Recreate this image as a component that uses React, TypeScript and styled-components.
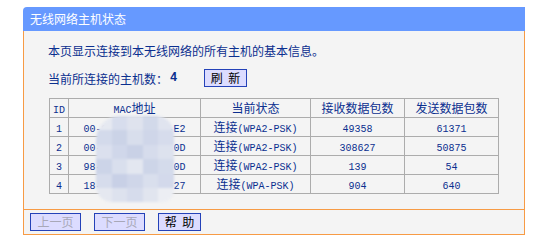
import React from "react";
import styled, { createGlobalStyle } from "styled-components";

const GlobalStyle = createGlobalStyle`
  html, body { margin: 0; padding: 0; background: #ffffff; }
  body { font-family: "Noto Sans CJK SC", "Liberation Sans", sans-serif; font-size: 12px; }
`;

const ORANGE = "#F79B45";
const TEXT = "#0B2F8F";

const Panel = styled.div`
  margin: 7px 0 0 23px;
  width: 502px;
`;

const Header = styled.div`
  height: 24px;
  background: #6699ff;
  border-top-left-radius: 4px;
  color: #ffffff;
  font-size: 12px;
  line-height: 24px;
  padding-left: 7px;
`;

const Body = styled.div`
  height: 178px;
  box-sizing: border-box;
  background: #f4f4f4;
  border-left: 1px solid ${ORANGE};
  border-right: 1px solid ${ORANGE};
  padding: 13px 0 0 24px;
  color: ${TEXT};
`;

const Line = styled.div`
  height: 14px;
  line-height: 14px;
`;

const CountRow = styled.div`
  display: flex;
  align-items: center;
  margin-top: 11px;
  height: 18px;
`;

const Count = styled.span`
  font-family: "Liberation Mono", monospace;
  font-weight: bold;
  margin-left: 2px;
  width: 34px;
  display: inline-block;
`;

const Button = styled.button<{ $w: number; $disabled?: boolean }>`
  box-sizing: border-box;
  width: ${(p) => p.$w}px;
  height: 18px;
  padding: 0;
  margin: 0;
  background: #dcdcff;
  border: 1px solid #2442b8;
  font-family: "Noto Sans CJK SC", sans-serif;
  font-size: 12px;
  line-height: 16px;
  color: ${(p) => (p.$disabled ? "#a8a8b8" : "#000000")};
  word-spacing: 3px;
`;

const TableWrap = styled.div`
  position: relative;
  margin-top: 11px;
  margin-left: 1px;
  width: 449px;
`;

const Table = styled.table`
  border-collapse: collapse;
  width: 449px;
  table-layout: fixed;
  border-right: 1px solid #9a9a9a;
  border-bottom: 1px solid #9a9a9a;
`;

const Cell = styled.td`
  border: 1px solid #acacac;
  height: 19px;
  box-sizing: border-box;
  padding: 0;
  text-align: center;
  vertical-align: middle;
  color: ${TEXT};
  font-size: 12px;
  line-height: 16px;
  white-space: nowrap;
  overflow: hidden;
`;

const HeadCell = styled(Cell).attrs({ as: "th" })`
  font-weight: normal;
`;

const Mono = styled.span`
  font-family: "Liberation Mono", monospace;
  font-size: 10px;
  line-height: 1;
`;

const Mosaic = styled.div`
  position: absolute;
  left: 47px;
  top: 18px;
  width: 78px;
  height: 86px;
  display: grid;
  grid-template-columns: repeat(5, 15.6px);
  grid-auto-rows: 14.4px;
  border-radius: 24px 18px 12px 16px;
  overflow: hidden;
  filter: blur(0.8px);
`;

const Block = styled.div<{ $c: string }>`
  background: ${(p) => p.$c};
`;

const Footer = styled.div`
  height: 26px;
  box-sizing: border-box;
  background: #f4f4f4;
  border: 1px solid ${ORANGE};
  display: flex;
  align-items: center;
  gap: 13px;
  padding-left: 6px;
`;

const mosaicColors = [
  "#e6e9f1", "#d7dded", "#dfe3ee", "#d2d9ea", "#e0e4ef",
  "#d3daeb", "#cbd3e7", "#d8deec", "#cfd6e9", "#d6dcec",
  "#dbe0ee", "#d0d7ea", "#c9d1e6", "#d6dcec", "#dde2ee",
  "#ccd4e8", "#d9dfed", "#e3e7f0", "#cdd5e8", "#d4dbeb",
  "#d6dcec", "#c8d0e6", "#cfd6e9", "#d9dfed", "#d3d9eb",
  "#e5e8f0", "#dde2ee", "#d6dcec", "#e1e5ef", "#eceef3",
];

const rows = [
  { id: "1", mac: "00-00-00-00-00-E2", st: "WPA2-PSK", rx: "49358", tx: "61371" },
  { id: "2", mac: "00-00-00-00-00-0D", st: "WPA2-PSK", rx: "308627", tx: "50875" },
  { id: "3", mac: "98-00-00-00-00-0D", st: "WPA2-PSK", rx: "139", tx: "54" },
  { id: "4", mac: "18-00-00-00-00-27", st: "WPA-PSK", rx: "904", tx: "640" },
];

export default function App() {
  return (
    <>
      <GlobalStyle />
      <Panel>
        <Header>无线网络主机状态</Header>
        <Body>
          <Line>本页显示连接到本无线网络的所有主机的基本信息。</Line>
          <CountRow>
            当前所连接的主机数：<Count>4</Count>
            <Button $w={43}>刷 新</Button>
          </CountRow>
          <TableWrap>
            <Table>
              <colgroup>
                <col style={{ width: 19 }} />
                <col style={{ width: 132 }} />
                <col style={{ width: 110 }} />
                <col style={{ width: 94 }} />
                <col style={{ width: 94 }} />
              </colgroup>
              <thead>
                <tr>
                  <HeadCell><Mono>ID</Mono></HeadCell>
                  <HeadCell><Mono>MAC</Mono>地址</HeadCell>
                  <HeadCell>当前状态</HeadCell>
                  <HeadCell>接收数据包数</HeadCell>
                  <HeadCell>发送数据包数</HeadCell>
                </tr>
              </thead>
              <tbody>
                {rows.map((r) => (
                  <tr key={r.id}>
                    <Cell><Mono>{r.id}</Mono></Cell>
                    <Cell><Mono>{r.mac}</Mono></Cell>
                    <Cell>连接<Mono>({r.st})</Mono></Cell>
                    <Cell><Mono>{r.rx}</Mono></Cell>
                    <Cell><Mono>{r.tx}</Mono></Cell>
                  </tr>
                ))}
              </tbody>
            </Table>
            <Mosaic>
              {mosaicColors.map((c, i) => (
                <Block key={i} $c={c} />
              ))}
            </Mosaic>
          </TableWrap>
        </Body>
        <Footer>
          <Button $w={51} $disabled>上一页</Button>
          <Button $w={51} $disabled>下一页</Button>
          <Button $w={43}>帮 助</Button>
        </Footer>
      </Panel>
    </>
  );
}
